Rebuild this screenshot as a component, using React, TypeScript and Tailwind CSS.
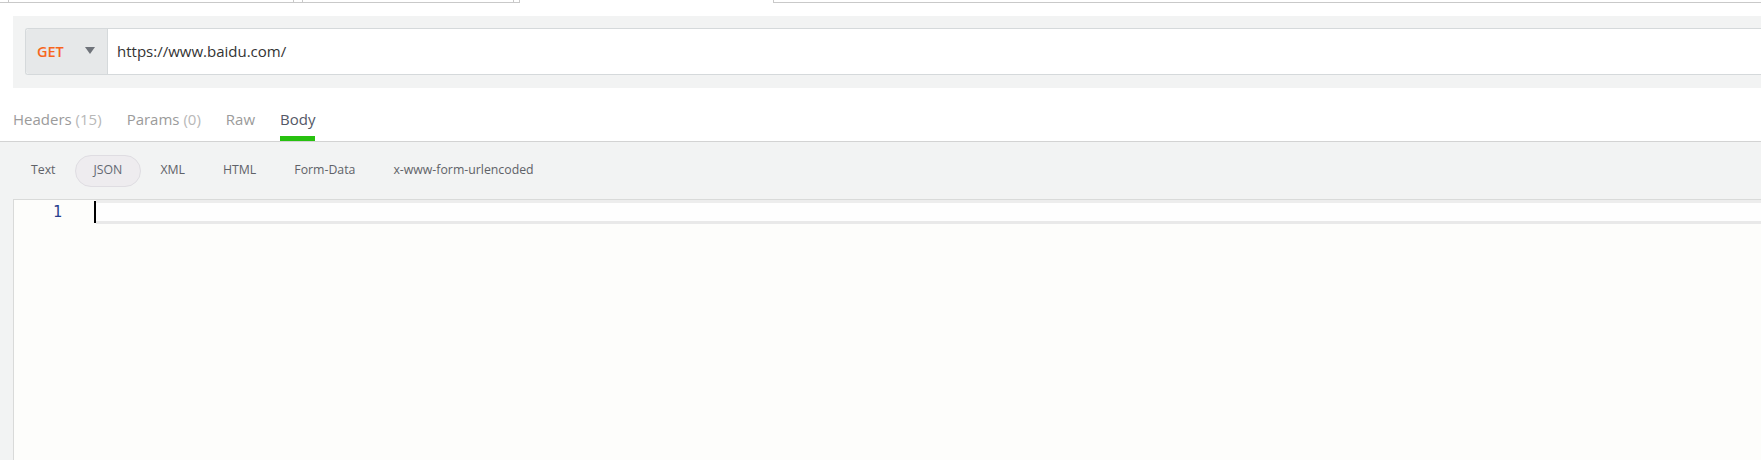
import React from "react";

const bodyTypes = ["Text", "JSON", "XML", "HTML", "Form-Data", "x-www-form-urlencoded"];

function TopStrip() {
  // slivers of the window tabs that sit just above the request panel
  return (
    <div className="flex h-[16px] items-start">
      <div className="flex h-[3px] w-full">
        <div className="w-[8px] border-b border-[#c9c9c9]" />
        <div className="w-[286px] border-x border-b border-[#c9c9c9]" />
        <div className="w-[8px] border-b border-[#c9c9c9]" />
        <div className="w-[212px] border-x border-b border-[#c9c9c9]" />
        <div className="w-[6px] border-r border-b border-[#c9c9c9]" />
        <div className="w-[253px]" />
        <div className="flex-1 border-l border-b border-[#c9c9c9]" />
      </div>
    </div>
  );
}

function UrlBar() {
  return (
    <div className="ml-[13px] bg-[#f2f3f3] pt-[12px] pb-[13px] pl-[12px]">
      <div className="flex h-[47px] rounded-l-[3px] border border-r-0 border-[#d5d9db] bg-white">
        <div className="flex w-[82px] items-center rounded-l-[3px] border-r border-[#d5d9db] bg-[#e6e8e9] pl-[11px]">
          <span className="text-[14.5px] font-semibold text-[#f7661c]">GET</span>
          <svg className="ml-[21px] mt-[-3px]" width="10" height="7" viewBox="0 0 10 7">
            <polygon points="0,0 10,0 5,7" fill="#6f737a" />
          </svg>
        </div>
        <div className="flex items-center pl-[9px] pb-[1px] text-[15px] text-[#333]">https://www.baidu.com/</div>
      </div>
    </div>
  );
}

function Tabs() {
  const tabs = [
    { label: "Headers", count: "(15)" },
    { label: "Params", count: "(0)" },
    { label: "Raw" },
    { label: "Body", active: true },
  ];
  return (
    <div className="flex h-[54px] items-end gap-[25px] border-b border-[#d3d3d3] pl-[13px]">
      {tabs.map((t) => (
        <div key={t.label} className="flex flex-col items-stretch">
          <span className={`text-[15px] leading-[20px] ${t.active ? "text-[#535866]" : "text-[#9b9b9b]"}`}>
            {t.label}
            {t.count && <span className="text-[#b8b8b8]"> {t.count}</span>}
          </span>
          <div className={`mt-[7px] h-[5px] ${t.active ? "bg-[#27c10f]" : ""}`} />
        </div>
      ))}
    </div>
  );
}

function BodyTypes() {
  return (
    <div className="flex h-[57px] items-center bg-[#f2f3f3] pl-[12px]">
      {bodyTypes.map((b) => (
        <div
          key={b}
          className={`flex h-[32px] items-center rounded-full border px-[18px] text-[12.3px] ${
            b === "JSON" ? "border-[#dfdde2] bg-[#eeecef] text-[#646872]" : "border-transparent text-[#5f6268]"
          }`}
        >
          {b}
        </div>
      ))}
    </div>
  );
}

function Editor() {
  return (
    <div className="flex-1 bg-[#f2f3f3] pl-[13px]">
      <div className="h-full border-t border-l border-[#d9dad9] bg-[#fdfdfb]">
        <div className="flex h-[24px]">
          <div className="flex w-[80px] items-center justify-end pr-[32px] font-['DejaVu_Sans_Mono',monospace] text-[15px] text-[#27408e]">
            1
          </div>
          <div className="mt-[1px] h-[22px] w-[2px] bg-black" />
          <div className="flex-1 border-t-[3px] border-b-[3px] border-t-[#ededed] border-b-[#e9e9e9] bg-[#fefefe]" />
        </div>
      </div>
    </div>
  );
}

export default function App() {
  return (
    <div className="flex h-[460px] w-full flex-col overflow-hidden bg-white font-['Open_Sans',sans-serif]">
      <TopStrip />
      <UrlBar />
      <Tabs />
      <BodyTypes />
      <Editor />
    </div>
  );
}
